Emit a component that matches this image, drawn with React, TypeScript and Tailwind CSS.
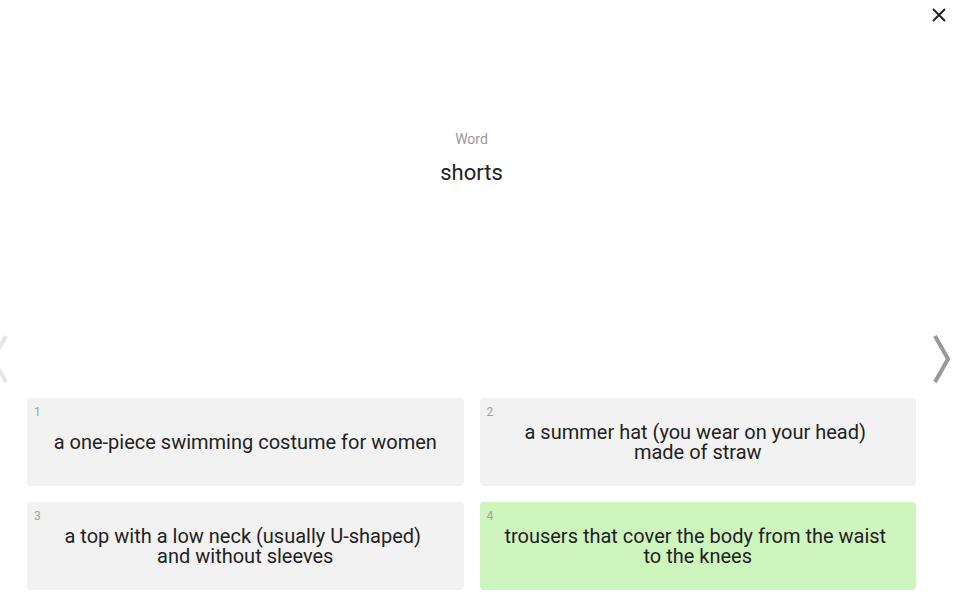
import React from "react";

const cards = [
  { n: 1, text: "a one-piece swimming costume for women", green: false },
  { n: 2, text: "a summer hat (you wear on your head) made of straw", green: false },
  { n: 3, text: "a top with a low neck (usually U-shaped) and without sleeves", green: false },
  { n: 4, text: "trousers that cover the body from the waist to the knees", green: true },
];

export default function App() {
  return (
    <div className="relative w-[962px] h-[612px] bg-white overflow-hidden" style={{ fontFamily: "Roboto, 'Liberation Sans', sans-serif" }}>
      <button className="absolute left-[929px] top-[5px] w-[20px] h-[20px] flex items-center justify-center text-[#222]">
        <svg width="16" height="16" viewBox="0 0 16 16" fill="none" stroke="#1f2328" strokeWidth="2">
          <path d="M2 2 L14 14 M14 2 L2 14" />
        </svg>
      </button>
      <svg className="absolute left-[-12px] top-[334px]" width="22" height="50" viewBox="0 0 22 50" fill="none" stroke="#e6e6e6" strokeWidth="4">
        <path d="M18 2 L5 25 L18 48" />
      </svg>
      <svg className="absolute left-[932px] top-[334px]" width="20" height="50" viewBox="0 0 20 50" fill="none" stroke="#999999" strokeWidth="4">
        <path d="M3 2 L16 25 L3 48" />
      </svg>

      <div className="ml-[27px] w-[889px] flex flex-col items-center pt-[131px]">
        <div className="text-[14px] leading-[16px] text-[#9a9a9a]">Word</div>
        <div className="mt-[13px] text-[22px] leading-[26px] text-[#222]">shorts</div>
      </div>

      <div className="absolute left-[27px] top-[398px] w-[889px] grid grid-cols-2 gap-x-[16px] gap-y-[16px]">
        {cards.map((c) => (
          <div
            key={c.n}
            className={`relative h-[88px] rounded-[4px] flex items-center justify-center px-[24px] text-center ${c.green ? "bg-[#cff5bf]" : "bg-[#f2f2f2]"}`}
          >
            <span className="absolute left-[7px] top-[7px] text-[12px] leading-[14px] text-[#a0a0a0]">{c.n}</span>
            <span className="text-[20px] leading-[20px] text-[#222] whitespace-break-spaces">{c.text}</span>
          </div>
        ))}
      </div>
    </div>
  );
}
